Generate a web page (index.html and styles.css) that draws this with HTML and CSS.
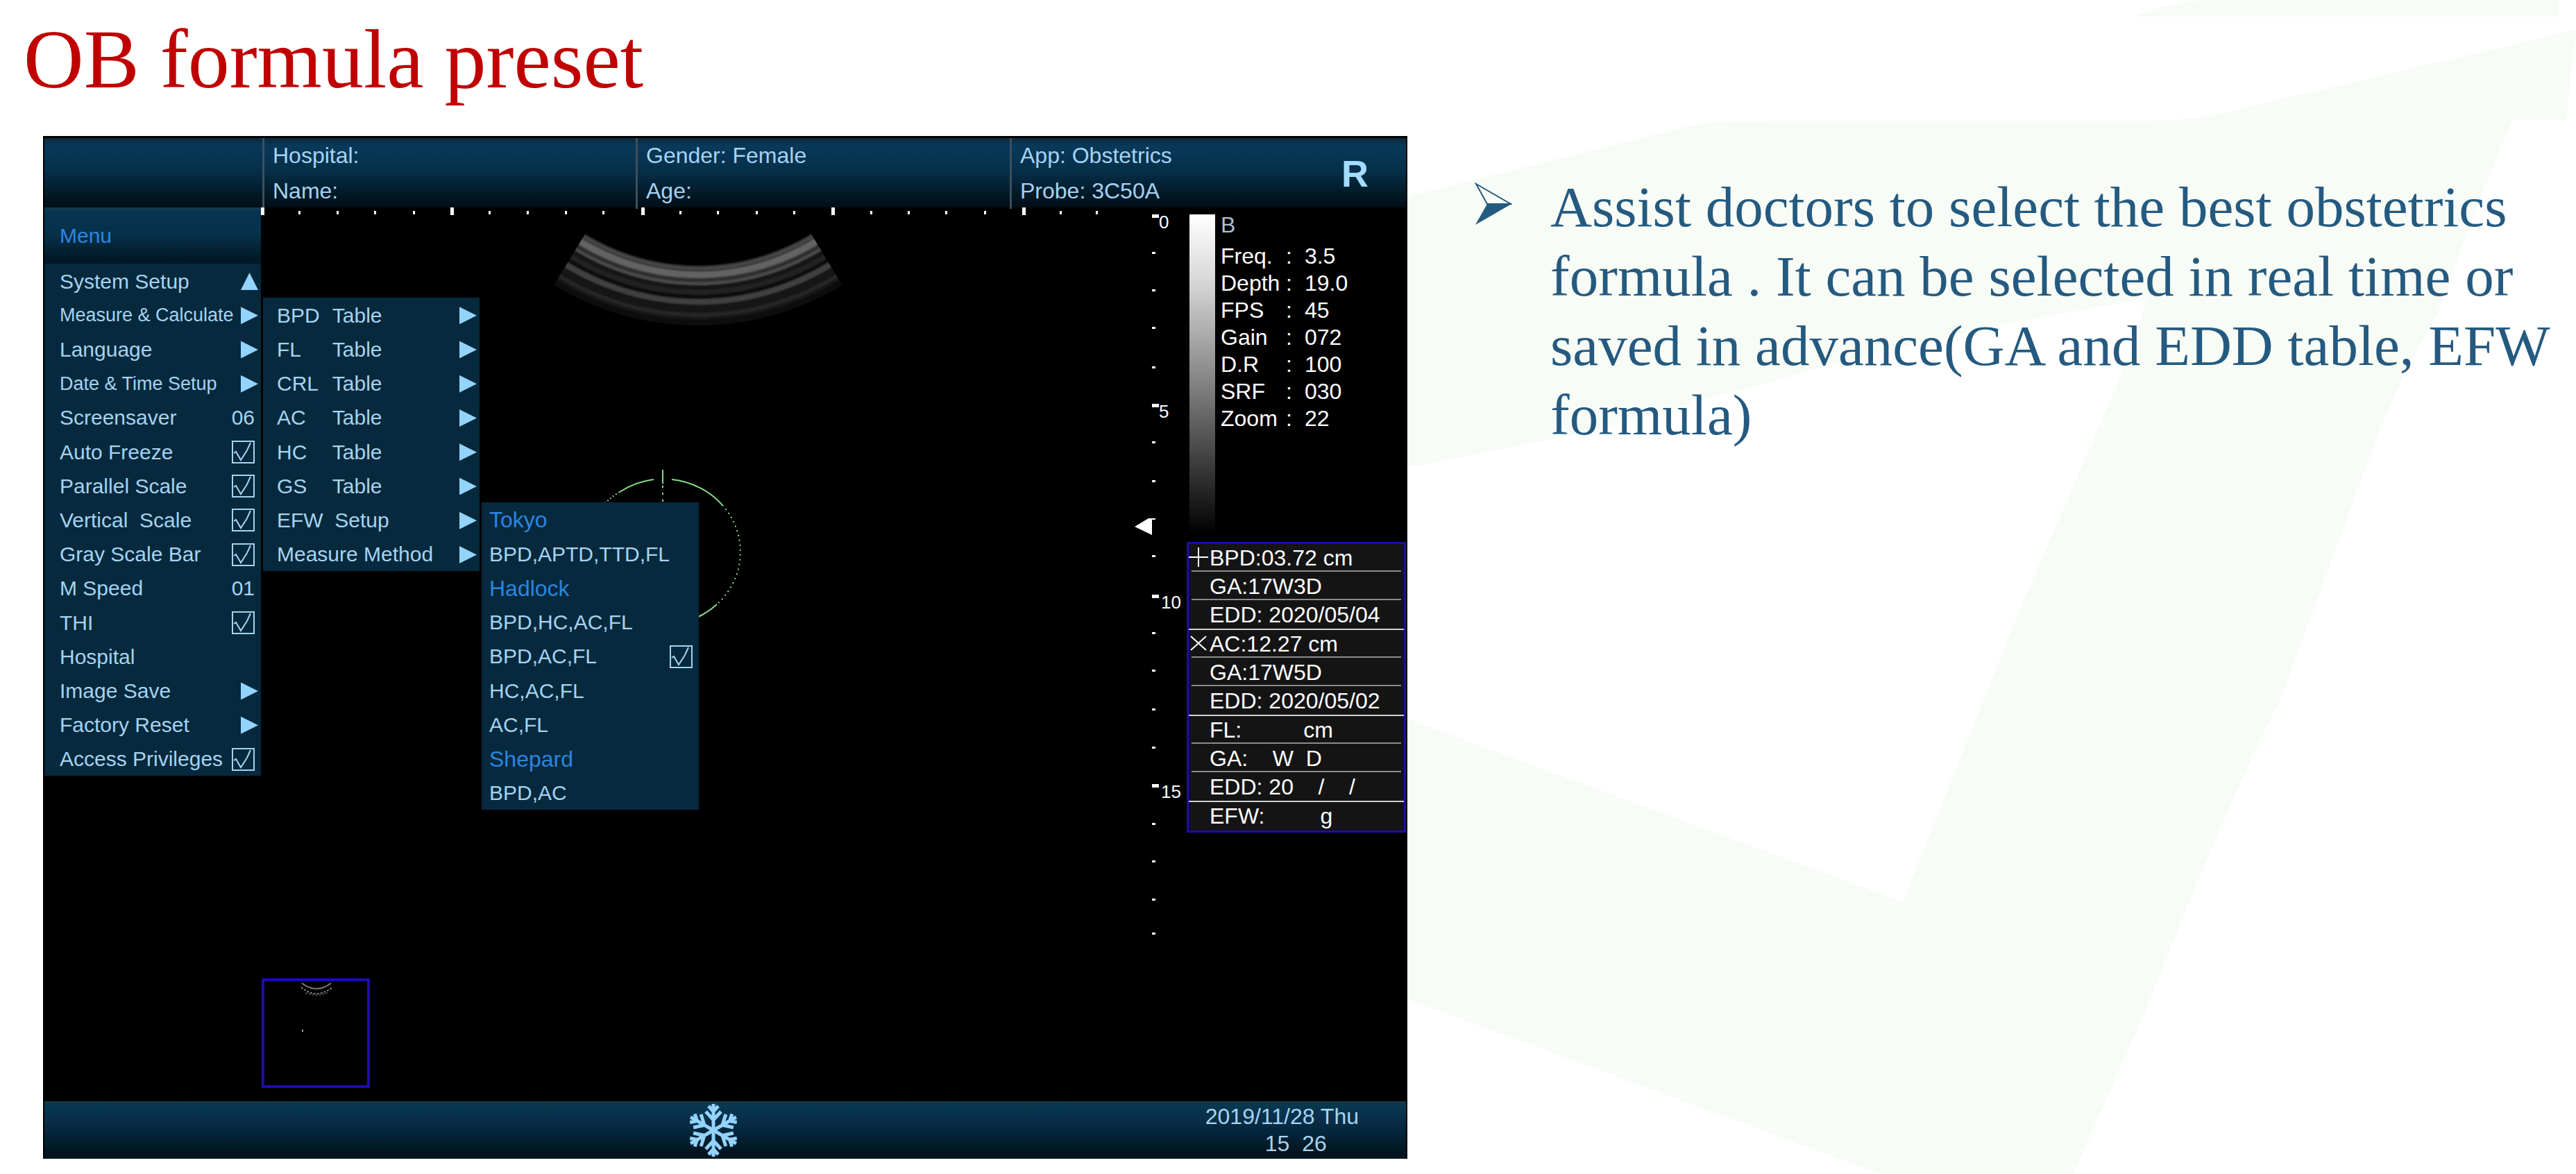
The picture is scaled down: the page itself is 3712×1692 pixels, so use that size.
FILE: index.html
```html
<!DOCTYPE html>
<html lang="en">

<head>
    <meta charset="UTF-8">
    <meta name="viewport" content="width=device-width, initial-scale=1.0">
    <title>OB formula preset</title>
    <link rel="stylesheet" href="styles.css">
</head>

<body>
    <svg class="backdrop" viewBox="0 0 3712 1692" preserveAspectRatio="none" aria-hidden="true">
        <path d="M3075 24 Q3110 8 3174 0 H3687 V24 Z" />
        <path d="M2028 283 L2448 178 Q2500 174 2600 174 H3100 Q3170 174 3240 154 L3712 43 L3698 173 H3621 Q3570 290 3512 453 Q3450 560 3419 647 L3288 1003 Q3200 1180 3092 1456 L2988 1692 H2710 L2028 1440 V1036 L2742 1300 L2830 1079 L2917 863 L3048 561 Q3075 500 3092 431 Q2880 465 2680 515 L2273 626 L2028 674 Z" />
    </svg>

    <h1 class="title">OB formula preset</h1>

    <main class="slide">
        <section class="screen">
            <header class="patient">
                <div class="patient-cell"></div>
                <div class="patient-cell">
                    <div>Hospital:</div>
                    <div>Name:</div>
                </div>
                <div class="patient-cell">
                    <div>Gender: Female</div>
                    <div>Age:</div>
                </div>
                <div class="patient-cell probe">
                    <div>
                        <div>App: Obstetrics</div>
                        <div>Probe: 3C50A</div>
                    </div>
                    <div class="orientation">R</div>
                </div>
            </header>

            <div class="viewer">
                <svg class="scan" viewBox="64 298 1962 1288" role="img" aria-label="Ultrasound image">
                    <defs>
                        <clipPath id="sector">
                            <path d="M1006 69 L750 489 H1262 Z" />
                        </clipPath>
                        <filter id="soft">
                            <feGaussianBlur stdDeviation="1" />
                        </filter>
                    </defs>

                    <!-- horizontal ruler -->
                    <g fill="#fff">
                        <path d="M376 298h5v11h-5z M649 298h5v11h-5z M924 298h5v11h-5z M1198 298h5v11h-5z M1473 298h5v11h-5z" />
                        <path d="M430 303h3v5h-3z M485 303h3v5h-3z M539 303h3v5h-3z M595 303h3v5h-3z M704 303h3v5h-3z M759 303h3v5h-3z M814 303h3v5h-3z M868 303h3v5h-3z M979 303h3v5h-3z M1033 303h3v5h-3z M1089 303h3v5h-3z M1143 303h3v5h-3z M1254 303h3v5h-3z M1308 303h3v5h-3z M1362 303h3v5h-3z M1418 303h3v5h-3z M1527 303h3v5h-3z M1579 303h3v5h-3z" />
                    </g>

                    <!-- depth ruler -->
                    <g fill="#fff">
                        <path d="M1660 308h10v5h-10z M1660 581h10v5h-10z M1660 856h10v5h-10z M1660 1129h10v5h-10z" />
                        <path d="M1660 362h5v3h-5z M1660 416h5v3h-5z M1660 470h5v3h-5z M1660 527h5v3h-5z M1660 635h5v3h-5z M1660 691h5v3h-5z M1660 799h5v3h-5z M1660 910h5v3h-5z M1660 964h5v3h-5z M1660 1020h5v3h-5z M1660 1075h5v3h-5z M1660 1185h5v3h-5z M1660 1239h5v3h-5z M1660 1294h5v3h-5z M1660 1343h5v3h-5z" />
                        <path d="M1635 758 L1655 746 H1665 V748 H1660 V770 Z" />
                        <g class="depth-label">
                            <text x="1670" y="328">0</text>
                            <text x="1670" y="601">5</text>
                            <text x="1673" y="876">10</text>
                            <text x="1673" y="1149">15</text>
                        </g>
                    </g>

                    <!-- convex probe echo -->
                    <g clip-path="url(#sector)" fill="none" filter="url(#soft)">
                        <circle cx="1006" cy="69" r="356" stroke="#161616" stroke-width="86" />
                        <circle cx="1006" cy="69" r="326" stroke="#383838" stroke-width="26" />
                        <circle cx="1006" cy="69" r="326" stroke="#646464" stroke-width="9" />
                        <circle cx="1006" cy="69" r="317" stroke="#494949" stroke-width="3" />
                        <circle cx="1006" cy="69" r="334" stroke="#2a2a2a" stroke-width="3" />
                        <circle cx="1006" cy="69" r="339" stroke="#4c4c4c" stroke-width="4" />
                        <circle cx="1006" cy="69" r="343" stroke="#151515" stroke-width="3" />
                        <circle cx="1006" cy="69" r="351" stroke="#202020" stroke-width="7" />
                        <circle cx="1006" cy="69" r="358" stroke="#0a0a0a" stroke-width="4" />
                        <circle cx="1006" cy="69" r="365" stroke="#404040" stroke-width="8" />
                        <circle cx="1006" cy="69" r="373" stroke="#131313" stroke-width="5" />
                        <circle cx="1006" cy="69" r="384" stroke="#252525" stroke-width="6" />
                        <circle cx="1006" cy="69" r="395" stroke="#0a0a0a" stroke-width="8" />
                    </g>

                    <!-- measured ellipse -->
                    <g fill="none" stroke="#86dc86" stroke-width="2">
                        <path d="M968 690 A111 105 0 0 1 1041 727" />
                        <path d="M1041 727 A111 105 0 0 1 1033 870" stroke-dasharray="2 5" />
                        <path d="M1033 870 A111 105 0 0 1 1004 889" />
                        <path d="M942 690 A111 105 0 0 0 893 708" />
                        <path d="M893 708 A111 105 0 0 0 870 726" stroke-dasharray="2 3" />
                        <path d="M955 676 V696" />
                        <path d="M955 699 V724" stroke-dasharray="3 7" />
                    </g>

                    <!-- saved frame -->
                    <rect x="379" y="1411" width="152" height="154" fill="none" stroke="#1d0bb0" stroke-width="4" />
                    <g fill="none" stroke="#7a7a7a" stroke-width="2">
                        <path d="M435 1416 Q456 1432 477 1416" />
                        <path d="M434 1422 Q456 1440 479 1422" stroke-dasharray="3 2" />
                        <path d="M440 1430 Q456 1436 472 1430" stroke="#444" stroke-dasharray="3 2" />
                    </g>
                    <rect x="435" y="1483" width="2" height="3" fill="#aaa" />
                </svg>

                <div class="overlay">
                    <nav class="menu">
                        <h2 class="menu-title">Menu</h2>
                        <ul class="menu-list">
                            <li><button class="item" type="button">System Setup <span class="arrow up"></span></button></li>
                            <li><button class="item long" type="button">Measure &amp; Calculate <span class="arrow"></span></button></li>
                            <li><button class="item" type="button">Language <span class="arrow"></span></button></li>
                            <li><button class="item long" type="button">Date &amp; Time Setup <span class="arrow"></span></button></li>
                            <li><button class="item" type="button">Screensaver <span class="value">06</span></button></li>
                            <li><label class="item">Auto Freeze <input class="check" type="checkbox" checked></label></li>
                            <li><label class="item">Parallel Scale <input class="check" type="checkbox" checked></label></li>
                            <li><label class="item">Vertical&nbsp; Scale <input class="check" type="checkbox" checked></label></li>
                            <li><label class="item">Gray Scale Bar <input class="check" type="checkbox" checked></label></li>
                            <li><button class="item" type="button">M Speed <span class="value">01</span></button></li>
                            <li><label class="item">THI <input class="check" type="checkbox" checked></label></li>
                            <li><button class="item" type="button">Hospital</button></li>
                            <li><button class="item" type="button">Image Save <span class="arrow"></span></button></li>
                            <li><button class="item" type="button">Factory Reset <span class="arrow"></span></button></li>
                            <li><label class="item">Access Privileges <input class="check" type="checkbox" checked></label></li>
                        </ul>
                    </nav>

                    <ul class="menu-list submenu">
                        <li><button class="item" type="button"><span class="code">BPD</span> Table <span class="arrow"></span></button></li>
                        <li><button class="item" type="button"><span class="code">FL</span> Table <span class="arrow"></span></button></li>
                        <li><button class="item" type="button"><span class="code">CRL</span> Table <span class="arrow"></span></button></li>
                        <li><button class="item" type="button"><span class="code">AC</span> Table <span class="arrow"></span></button></li>
                        <li><button class="item" type="button"><span class="code">HC</span> Table <span class="arrow"></span></button></li>
                        <li><button class="item" type="button"><span class="code">GS</span> Table <span class="arrow"></span></button></li>
                        <li><button class="item" type="button">EFW&nbsp; Setup <span class="arrow"></span></button></li>
                        <li><button class="item" type="button">Measure Method <span class="arrow"></span></button></li>
                    </ul>

                    <ul class="menu-list formulas">
                        <li class="item author">Tokyo</li>
                        <li><button class="item" type="button">BPD,APTD,TTD,FL</button></li>
                        <li class="item author">Hadlock</li>
                        <li><button class="item" type="button">BPD,HC,AC,FL</button></li>
                        <li><label class="item">BPD,AC,FL <input class="check" type="checkbox" checked></label></li>
                        <li><button class="item" type="button">HC,AC,FL</button></li>
                        <li><button class="item" type="button">AC,FL</button></li>
                        <li class="item author">Shepard</li>
                        <li><button class="item" type="button">BPD,AC</button></li>
                    </ul>

                    <aside class="info">
                        <div class="params">
                            <div class="gray-bar"></div>
                            <div>
                                <div class="mode">B</div>
                                <table class="param-table">
                                    <tr><th>Freq.</th><td>:</td><td>3.5</td></tr>
                                    <tr><th>Depth</th><td>:</td><td>19.0</td></tr>
                                    <tr><th>FPS</th><td>:</td><td>45</td></tr>
                                    <tr><th>Gain</th><td>:</td><td>072</td></tr>
                                    <tr><th>D.R</th><td>:</td><td>100</td></tr>
                                    <tr><th>SRF</th><td>:</td><td>030</td></tr>
                                    <tr><th>Zoom</th><td>:</td><td>22</td></tr>
                                </table>
                            </div>
                        </div>

                        <ul class="results">
                            <li><svg class="mark" viewBox="0 0 28 28"><path d="M0 14H28M14 0V28" /></svg>BPD:03.72 cm</li>
                            <li>GA:17W3D</li>
                            <li class="last">EDD: 2020/05/04</li>
                            <li><svg class="mark" viewBox="0 0 28 28"><path d="M3 4L25 24M25 4L3 24" /></svg>AC:12.27 cm</li>
                            <li>GA:17W5D</li>
                            <li class="last">EDD: 2020/05/02</li>
                            <li>FL:          cm</li>
                            <li>GA:    W  D</li>
                            <li class="last">EDD: 20    /    /</li>
                            <li>EFW:         g</li>
                        </ul>
                    </aside>
                </div>
            </div>

            <footer class="status">
                <svg class="snowflake" viewBox="-34 -38 68 76" role="img" aria-label="Frozen">
                    <defs>
                        <g id="arm">
                            <path d="M0 0V-38M-7 -35L0 -27L7 -35M-11 -27L0 -15L11 -27" />
                        </g>
                    </defs>
                    <use href="#arm" />
                    <use href="#arm" transform="rotate(60)" />
                    <use href="#arm" transform="rotate(120)" />
                    <use href="#arm" transform="rotate(180)" />
                    <use href="#arm" transform="rotate(240)" />
                    <use href="#arm" transform="rotate(300)" />
                </svg>
                <div class="clock">
                    <div>2019/11/28 Thu</div>
                    <div class="time">15&nbsp; 26</div>
                </div>
            </footer>
        </section>

        <ul class="notes">
            <li>
                <svg class="bullet" viewBox="0 0 54 62" aria-hidden="true">
                    <path class="bullet-line" d="M2 2L52 31H18Z" />
                    <path class="bullet-fill" d="M18 31H53L1 61Z" />
                </svg>
                <p>Assist doctors to select the best obstetrics formula . It can be selected in real time or saved in advance(GA and EDD table, EFW formula)</p>
            </li>
        </ul>
    </main>
</body>

</html>
```
FILE: styles.css
```css
body {
    margin: 0;
    background-color: #fff;
    font-family: "Liberation Serif", "Times New Roman", serif;
    position: relative;
}

ul {
    list-style: none;
    margin: 0;
    padding: 0;
}

.backdrop {
    position: absolute;
    top: 0;
    left: 0;
    width: 100%;
    height: 100%;
    z-index: -1;
    fill: #f7fcf6;
}

.title {
    margin: 0;
    padding: 0 34px 24px;
    font-size: 120px;
    line-height: 172px;
    font-weight: normal;
    color: #c00000;
}

.slide {
    display: grid;
    grid-template-columns: 1966fr 1561fr;
    gap: 97px;
    align-items: start;
    padding: 0 26px 22px 62px;
}

/* scanner screen */
.screen {
    border: 2px solid #000;
    border-top-width: 3px;
    border-bottom-width: 0;
    background-color: #000;
    color: #a5d3f0;
    font-family: "Liberation Sans", Arial, sans-serif;
    font-size: 32px;
}

.patient {
    display: grid;
    grid-template-columns: 314px 538px 539px 1fr;
    height: 100px;
    line-height: 51px;
    background: linear-gradient(#0a2a3c, #08395a 12%, #06304a 45%, #021a28 80%, #010e16);
}

.patient-cell {
    padding-left: 12px;
    border-left: 3px solid #3d4f5c;
}

.patient-cell:first-child {
    border-left: none;
}

.probe {
    display: flex;
    justify-content: space-between;
    align-items: center;
    padding-right: 54px;
}

.orientation {
    font-size: 54px;
    font-weight: bold;
    color: #a3dcff;
}

.viewer {
    display: grid;
}

.scan {
    grid-area: 1 / 1;
    display: block;
    width: 100%;
}

.depth-label {
    font-size: 26px;
}

.overlay {
    grid-area: 1 / 1;
    display: grid;
    grid-template-columns: 312px 312px 313px 1fr 316px;
    column-gap: 3px;
    align-items: start;
}

/* menus */
.menu-title {
    margin: 0;
    padding-left: 22px;
    line-height: 81px;
    font-size: 30px;
    font-weight: normal;
    color: #2b86e0;
    background: linear-gradient(#1a3a4c, #063450 8%, #053048 50%, #021824 95%);
}

.menu-list {
    display: grid;
    grid-auto-rows: 1fr;
    min-height: 738px;
    background-color: #06293d;
}

.submenu {
    min-height: 394px;
    margin-top: 130px;
}

.formulas {
    min-height: 443px;
    margin-top: 425px;
}

.item {
    display: flex;
    align-items: center;
    box-sizing: border-box;
    width: 100%;
    height: 100%;
    padding: 2px 4px 0 22px;
    border: none;
    background: none;
    color: inherit;
    font-family: inherit;
    font-size: 30px;
    text-align: left;
    white-space: pre;
    cursor: pointer;
}

.long {
    font-size: 27px;
}

.submenu .item {
    padding-left: 20px;
}

.formulas .item {
    padding-left: 11px;
}

.formulas .author {
    color: #2b86e0;
    font-size: 32px;
    cursor: default;
}

.code {
    width: 72px;
}

.arrow {
    width: 25px;
    height: 25px;
    margin-left: auto;
    background-color: #93d3fc;
    clip-path: polygon(0 0, 100% 50%, 0 100%);
}

.up {
    clip-path: polygon(50% 0, 100% 100%, 0 100%);
}

.value {
    margin-left: auto;
    padding-right: 5px;
}

.check {
    appearance: none;
    box-sizing: border-box;
    width: 33px;
    height: 33px;
    margin: 0 5px 0 auto;
    border: 2px solid #a5d3f0;
}

.check:checked {
    background: url("data:image/svg+xml,%3Csvg xmlns='http://www.w3.org/2000/svg' viewBox='0 0 29 29'%3E%3Cpath d='M1 16L4 14L11 26L20 12L25 1' fill='none' stroke='%23a5d3f0' stroke-width='2'/%3E%3C/svg%3E");
}

/* right column */
.info {
    grid-column: 5;
}

.params {
    display: flex;
    gap: 8px;
    height: 482px;
    padding-left: 4px;
    box-sizing: border-box;
    line-height: 39px;
    color: #fff;
}

.gray-bar {
    width: 37px;
    height: 461px;
    margin-top: 10px;
    background: linear-gradient(#fff, #d9d9d9 20%, #8f8f8f 48%, #444 75%, #000);
}

.mode {
    margin: 6px 0;
    color: #a9bfd6;
}

.param-table {
    border-collapse: collapse;
}

.param-table th {
    width: 94px;
    padding: 0;
    font-weight: normal;
    text-align: left;
}

.param-table td {
    padding: 0 18px 0 0;
}

.results {
    border: 3px solid #1d0bb0;
    background-color: #141414;
    color: #fff;
}

.results li {
    position: relative;
    height: 40px;
    line-height: 40px;
    padding-left: 30px;
    white-space: pre;
    background: linear-gradient(#8c8c8c, #8c8c8c) 4px 100% / 302px 2px no-repeat;
    border-bottom: 1px solid transparent;
}

.results .last {
    background: none;
    border-bottom: 2px solid #d0d0d0;
}

.results li:last-child {
    background: none;
}

.mark {
    position: absolute;
    left: 0;
    top: 5px;
    width: 28px;
    height: 28px;
    fill: none;
    stroke: #fff;
    stroke-width: 2;
}

/* bottom bar */
.status {
    display: grid;
    grid-template-columns: 930fr 68px 964fr;
    align-items: center;
    height: 83px;
    background: linear-gradient(#173746, #06384f 8%, #0a2f4a 30%, #04253a 55%, #021722 85%, #02121b);
}

.snowflake {
    grid-column: 2;
    width: 68px;
    height: 76px;
    fill: none;
    stroke: #93d3fc;
    stroke-width: 5;
}

.clock {
    justify-self: end;
    padding-right: 68px;
    line-height: 39px;
}

.time {
    padding-left: 86px;
}

/* notes beside the screen */
.notes {
    padding-top: 52px;
    color: #255a80;
    font-size: 83px;
    line-height: 100px;
}

.notes li {
    display: flex;
    gap: 55px;
}

.notes p {
    margin: 0;
}

.bullet {
    flex: none;
    width: 54px;
    height: 62px;
    margin-top: 15px;
}

.bullet-line {
    fill: none;
    stroke: #255a80;
    stroke-width: 2;
}

.bullet-fill {
    fill: #255a80;
}
```
